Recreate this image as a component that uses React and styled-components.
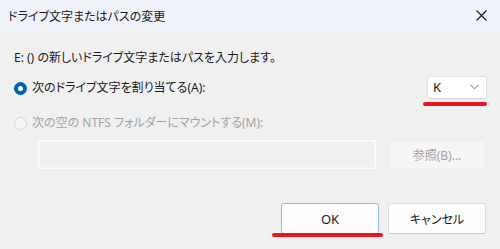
import React from 'react';
import styled, { createGlobalStyle } from 'styled-components';

const GlobalStyle = createGlobalStyle`
  body {
    margin: 0;
    background: #f0f0f0;
    font-family: "Noto Sans", "Noto Sans CJK JP", sans-serif;
    font-feature-settings: "palt";
    color: #1a1a1a;
  }
`

const Dialog = styled.div`
  width: 500px;
  height: 249px;
  display: flex;
  flex-direction: column;
  background: #f0f0f0;
  overflow: hidden;
`

const TitleBar = styled.div`
  height: 31px;
  background: #eff2f8;
  display: flex;
  align-items: center;
  justify-content: space-between;
  padding: 0 13px 1px 8px;
  font-size: 12px;
  color: #1a1a1a;
`

const Body = styled.div`
  flex: 1;
  display: flex;
  flex-direction: column;
  padding: 18px 14px 0 14px;
  font-size: 12px;
`

const Prompt = styled.div`
  line-height: 16px;
  height: 16px;
`

const OptionRow = styled.div`
  display: flex;
  align-items: center;
  justify-content: space-between;
  height: 24px;
  margin-top: ${p => p.$top}px;
`

const Label = styled.label`
  display: flex;
  align-items: center;
  gap: 5px;
  color: ${p => (p.$disabled ? '#a3a3a3' : '#1a1a1a')};
`

const Radio = styled.span`
  width: 13px;
  height: 13px;
  border-radius: 50%;
  box-sizing: border-box;
  margin-top: 2px;
  ${p => p.$checked
    ? 'background: #fff; border: 4px solid #005fb8;'
    : 'background: #f6f6f6; border: 1px solid #d2d2d2;'}
`

const Marked = styled.div`
  position: relative;
  display: flex;
`

const RedMark = styled.span`
  position: absolute;
  left: ${p => p.$left}px;
  right: ${p => p.$right}px;
  bottom: ${p => p.$bottom}px;
  height: 4px;
  border-radius: 2px;
  background: #ea1520;
`

const Select = styled.div`
  width: 60px;
  height: 23px;
  box-sizing: border-box;
  background: #fff;
  border: 1px solid #e3e3e3;
  border-bottom-color: #d6d6d6;
  border-radius: 3px;
  display: flex;
  align-items: center;
  justify-content: space-between;
  padding: 0 7px 0 5px;
  margin-right: -1px;
  font-size: 13px;
  color: #1a1a1a;
`

const PathRow = styled.div`
  display: flex;
  gap: 12px;
  margin-top: 6px;
  padding-left: 24px;
`

const PathInput = styled.div`
  width: 338px;
  height: 29px;
  box-sizing: border-box;
  border: 1px solid #fbfbfb;
  box-shadow: inset 0 0 0 1px #f6f6f6;
  background: #f0f0f0;
`

const Button = styled.button`
  width: 98px;
  height: ${p => p.$h || 31}px;
  box-sizing: border-box;
  border-radius: 3px;
  font-family: inherit;
  font-feature-settings: "palt";
  font-size: ${p => p.$fs || 12}px;
  padding: 0;
  background: ${p => (p.$disabled ? '#f5f5f5' : '#fdfdfd')};
  color: ${p => (p.$disabled ? '#a3a3a3' : '#1a1a1a')};
  border: 1px solid ${p => (p.$primary ? '#8ebde9' : p.$disabled ? '#ececec' : '#dcdcdc')};
  border-bottom-color: ${p => (p.$primary ? '#8ebde9' : p.$disabled ? '#ececec' : '#c8c8c8')};
`

const ButtonRow = styled.div`
  display: flex;
  justify-content: flex-end;
  gap: 9px;
  margin-top: 34px;
`

function CloseIcon() {
  return (
    <svg width="11" height="11" viewBox="0 0 11 11">
      <path d="M0.5 0.5 L10.5 10.5 M10.5 0.5 L0.5 10.5" stroke="#1a1a1a" strokeWidth="1.1" fill="none" />
    </svg>
  )
}

function Chevron() {
  return (
    <svg width="9" height="6" viewBox="0 0 9 6">
      <path d="M0.5 0.8 L4.5 4.8 L8.5 0.8" stroke="#6b6b6b" strokeWidth="1" fill="none" />
    </svg>
  )
}

export default function App() {
  return (
    <Dialog>
      <GlobalStyle />
      <TitleBar>
        <span>ドライブ文字またはパスの変更</span>
        <CloseIcon />
      </TitleBar>
      <Body>
        <Prompt>E: () の新しいドライブ文字またはパスを入力します。</Prompt>

        <OptionRow $top={9}>
          <Label>
            <Radio $checked />
            次のドライブ文字を割り当てる(A):
          </Label>
          <Marked>
            <Select>
              <span>K</span>
              <Chevron />
            </Select>
            <RedMark $left={-4} $right={-1} $bottom={-7} />
          </Marked>
        </OptionRow>

        <OptionRow $top={11}>
          <Label $disabled>
            <Radio />
            次の空の NTFS フォルダーにマウントする(M):
          </Label>
        </OptionRow>

        <PathRow>
          <PathInput />
          <Button $disabled $h={29}>参照(B)...</Button>
        </PathRow>

        <ButtonRow>
          <Marked>
            <Button $primary $fs={13}>OK</Button>
            <RedMark $left={-9} $right={-4} $bottom={-3} />
          </Marked>
          <Button>キャンセル</Button>
        </ButtonRow>
      </Body>
    </Dialog>
  )
}
